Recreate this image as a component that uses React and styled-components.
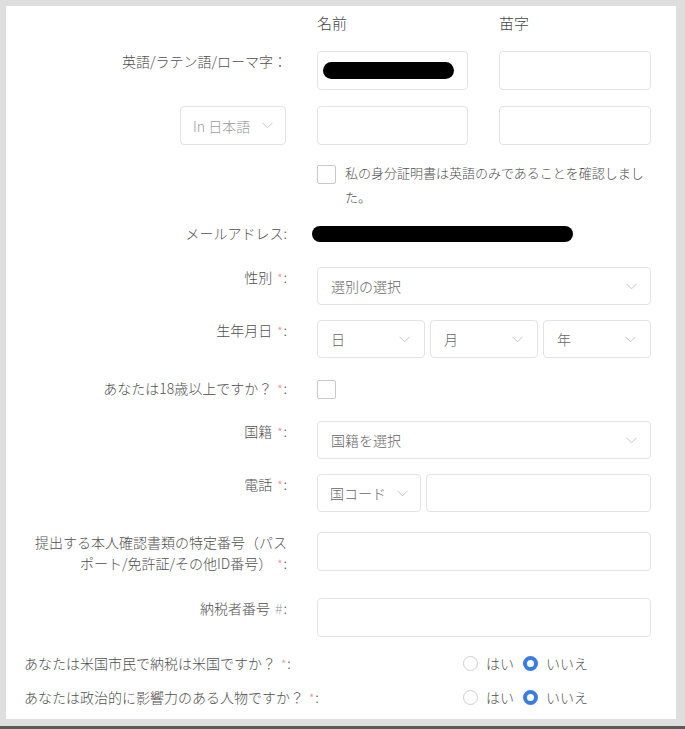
import React from 'react';
import styled, { createGlobalStyle } from 'styled-components';

const GlobalStyle = createGlobalStyle`
	body {
		margin: 0;
		font-family: 'Noto Sans CJK JP', 'Noto Sans', sans-serif;
		font-weight: 300;
		color: #555;
	}
`;

const Page = styled.div`
	box-sizing: border-box;
	height: 729px;
	padding: 6px 9px 7px 6px;
	background-color: #dedede;
	border-bottom: 3px solid #5a5a5a;
`;

const Panel = styled.div`
	height: 100%;
	background-color: #fff;
	padding-top: 7px;
	box-sizing: border-box;
`;

const Row = styled.div`
	display: grid;
	grid-template-columns: 281px 334px;
	column-gap: 30px;
	align-items: start;
	margin-top: ${({ $mt }) => $mt || 0}px;
`;

const Label = styled.div`
	font-size: 14px;
	line-height: 21px;
	color: #4f4f4f;
	text-align: right;
	white-space: nowrap;
`;

const LabelCell = styled.div`
	display: flex;
	justify-content: flex-end;
	padding-right: 1px;
`;

const Star = styled.span`
	color: #f48a8a;
	font-size: 12px;
	margin: 0 1px 0 5px;
`;

const Hash = styled.span`
	color: #aaa;
	margin: 0 1px 0 5px;
`;

const ColHead = styled.div`
	font-size: 15px;
	line-height: 20px;
	color: #444;
`;

const Pair = styled.div`
	display: grid;
	grid-template-columns: 151px 152px;
	column-gap: 31px;
`;

const Split = styled.div`
	display: grid;
	grid-template-columns: ${({ $cols }) => $cols};
	column-gap: 5px;
`;

const Input = styled.div`
	box-sizing: border-box;
	height: ${({ $h }) => $h || 39}px;
	border: 1px solid #e3e3e3;
	border-radius: 4px;
	background: #fff;
	display: flex;
	align-items: center;
	padding: 0 5px;
`;

const Select = styled.div`
	box-sizing: border-box;
	width: ${({ $w }) => ($w ? `${$w}px` : 'auto')};
	height: ${({ $h }) => $h || 39}px;
	border: 1px solid #e3e3e3;
	border-radius: 4px;
	background: #fff;
	display: flex;
	align-items: center;
	justify-content: space-between;
	padding: 0 ${({ $pr }) => $pr || 13}px 0 ${({ $pl }) => $pl || 13}px;
	font-size: 14px;
	color: ${({ $light }) => ($light ? '#9a9a9a' : '#666')};
`;

const Redacted = styled.div`
	height: ${({ $h }) => $h}px;
	width: ${({ $w }) => $w}px;
	background: #000;
	border-radius: 10px;
	margin-left: ${({ $ml }) => $ml || 0}px;
	margin-top: ${({ $mt }) => $mt || 0}px;
`;

const Box = styled.span`
	flex: none;
	display: block;
	box-sizing: border-box;
	width: 19px;
	height: 19px;
	border: 1px solid #c8c8c8;
	border-radius: 2px;
	background: #fff;
	margin-top: ${({ $mt }) => $mt || 0}px;
`;

const CheckLine = styled.div`
	display: flex;
	align-items: flex-start;
	gap: 9px;
`;

const CheckText = styled.div`
	font-size: 13px;
	line-height: 24px;
	color: #4f4f4f;
`;

const RadioRow = styled.div`
	display: grid;
	grid-template-columns: 439px auto;
	padding-left: 18px;
	margin-top: ${({ $mt }) => $mt || 0}px;
	font-size: 14px;
	line-height: 21px;
	color: #4f4f4f;
`;

const RadioGroup = styled.div`
	display: flex;
	align-items: center;
`;

const Radio = styled.span`
	box-sizing: border-box;
	width: 15px;
	height: 15px;
	border-radius: 50%;
	border: ${({ $on }) => ($on ? '4.5px solid #3a7de0' : '1px solid #cfcfcf')};
	background: #fff;
	margin-right: 8px;
`;

const RadioText = styled.span`
	margin-right: 9px;
`;

const Chevron = () => (
	<svg width='11' height='7' viewBox='0 0 11 7'>
		<polyline points='0.5,0.8 5.5,5.8 10.5,0.8' fill='none' stroke='#c3c6cc' strokeWidth='1' />
	</svg>
);

const Req = () => (
	<>
		<Star>*</Star>:
	</>
);

const App = () => {
	return (
		<Page>
			<GlobalStyle />
			<Panel>
				<Row>
					<div />
					<Pair>
						<ColHead>名前</ColHead>
						<ColHead>苗字</ColHead>
					</Pair>
				</Row>

				<Row $mt={18}>
					<Label>英語/ラテン語/ローマ字：</Label>
					<Pair>
						<Input>
							<Redacted $w={131} $h={17} />
						</Input>
						<Input />
					</Pair>
				</Row>

				<Row $mt={16}>
					<LabelCell>
						<Select $w={106} $light $pl={12} $pr={12}>
							In 日本語
							<Chevron />
						</Select>
					</LabelCell>
					<Pair>
						<Input />
						<Input />
					</Pair>
				</Row>

				<Row $mt={16}>
					<div />
					<CheckLine>
						<Box $mt={4} />
						<CheckText>私の身分証明書は英語のみであることを確認しました。</CheckText>
					</CheckLine>
				</Row>

				<Row $mt={14}>
					<Label>メールアドレス:</Label>
					<Redacted $w={261} $h={16} $ml={-5} $mt={3} />
				</Row>

				<Row $mt={23}>
					<Label>
						性別<Req />
					</Label>
					<Select $h={38}>
						選別の選択
						<Chevron />
					</Select>
				</Row>

				<Row $mt={15}>
					<Label>
						生年月日<Req />
					</Label>
					<Split $cols='108px 108px 108px'>
						<Select $h={38} $pr={14}>
							日
							<Chevron />
						</Select>
						<Select $h={38} $pr={14}>
							月
							<Chevron />
						</Select>
						<Select $h={38} $pr={14}>
							年
							<Chevron />
						</Select>
					</Split>
				</Row>

				<Row $mt={20}>
					<Label>
						あなたは18歳以上ですか？<Req />
					</Label>
					<div>
						<Box $mt={2} />
					</div>
				</Row>

				<Row $mt={22}>
					<Label>
						国籍<Req />
					</Label>
					<Select $h={38}>
						国籍を選択
						<Chevron />
					</Select>
				</Row>

				<Row $mt={15}>
					<Label>
						電話<Req />
					</Label>
					<Split $cols='104px 225px'>
						<Select $h={38} $pl={12} $pr={12}>
							国コード
							<Chevron />
						</Select>
						<Input $h={38} />
					</Split>
				</Row>

				<Row $mt={20}>
					<Label>
						提出する本人確認書類の特定番号（パス
						<br />
						ポート/免許証/その他ID番号）<Req />
					</Label>
					<Input />
				</Row>

				<Row $mt={24}>
					<Label>
						納税者番号<Hash>#</Hash>:
					</Label>
					<Input />
				</Row>

				<RadioRow $mt={16}>
					<div>
						あなたは米国市民で納税は米国ですか？<Req />
					</div>
					<RadioGroup>
						<Radio />
						<RadioText>はい</RadioText>
						<Radio $on />
						<RadioText>いいえ</RadioText>
					</RadioGroup>
				</RadioRow>

				<RadioRow $mt={13}>
					<div>
						あなたは政治的に影響力のある人物ですか？<Req />
					</div>
					<RadioGroup>
						<Radio />
						<RadioText>はい</RadioText>
						<Radio $on />
						<RadioText>いいえ</RadioText>
					</RadioGroup>
				</RadioRow>
			</Panel>
		</Page>
	);
};

export default App;
